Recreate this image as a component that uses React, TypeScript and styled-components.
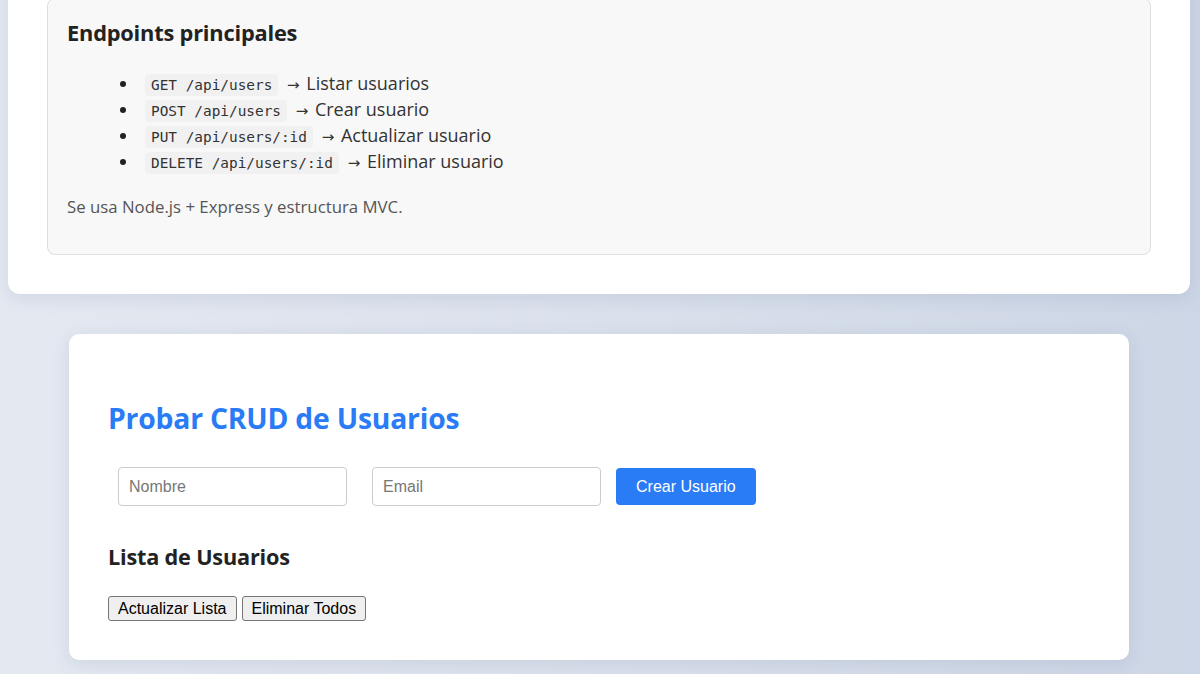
import React from "react";
import styled, { createGlobalStyle } from "styled-components";

const Global = createGlobalStyle`
  html, body { margin: 0; padding: 0; }
  body {
    background: linear-gradient(90deg, #e4e9f1 0%, #dbe1ec 50%, #cdd6e6 100%);
    min-height: 674px;
    font-family: "Open Sans", "Noto Sans", sans-serif;
    color: #222;
    overflow: hidden;
  }
`;

const Page = styled.div`
  padding: 0 10px 40px 8px;
  margin-top: -42px;
  display: flex;
  flex-direction: column;
  align-items: center;
  gap: 40px;
`;

const DocCard = styled.section`
  align-self: stretch;
  background: #fff;
  border-radius: 12px;
  box-shadow: 0 4px 18px rgba(60, 80, 120, 0.12);
  padding: 40px 39px 39px;
`;

const DocBox = styled.div`
  background: #f8f8f8;
  border: 1px solid #dedede;
  border-radius: 8px;
  padding: 19px 19px 36px;
`;

const DocTitle = styled.h3`
  margin: 0 0 23px;
  font-size: 21.8px;
  font-weight: 700;
  line-height: 29px;
  color: #222;
  letter-spacing: -0.2px;
`;

const EndpointList = styled.ul`
  margin: 0;
  padding-left: 72px;
  list-style: disc;
`;

const EndpointItem = styled.li`
  font-size: 18px;
  line-height: 26px;
  height: 26px;
  padding-left: 6px;
  color: #333;
  &::marker { color: #222; }
`;

const Code = styled.code`
  font-family: "DejaVu Sans Mono", "Liberation Mono", monospace;
  font-size: 14.4px;
  line-height: 1;
  background: #f1f1f1;
  color: #333;
  padding: 3px 6px;
  border-radius: 4px;
  margin-right: 4px;
`;

const Arrow = styled.span`
  font-family: "DejaVu Sans", sans-serif;
  font-size: 15px;
  line-height: 1;
  margin-right: 2px;
`;

const Note = styled.p`
  margin: 22px 0 0;
  font-size: 16.8px;
  line-height: 22px;
  color: #555;
`;

const CrudCard = styled.section`
  width: 1060px;
  box-sizing: border-box;
  background: #fff;
  border-radius: 10px;
  box-shadow: 0 4px 18px rgba(60, 80, 120, 0.12);
  padding: 66px 39px 39px;
`;

const CrudTitle = styled.h2`
  margin: 0 0 30px;
  font-size: 28.3px;
  line-height: 37px;
  font-weight: 700;
  color: #2a7bf6;
  letter-spacing: -0.2px;
`;

const FormRow = styled.div`
  display: flex;
  align-items: center;
  gap: 15px;
  padding-left: 10px;
`;

const TextInput = styled.input`
  width: 229px;
  height: 39px;
  box-sizing: border-box;
  border: 1px solid #ccc;
  border-radius: 4px;
  padding: 0 10px;
  font-family: "Liberation Sans", Arial, sans-serif;
  font-size: 16px;
  color: #222;
  background: #fff;
  & + & { margin-left: 10px; }
  &::placeholder { color: #777; }
`;

const PrimaryButton = styled.button`
  height: 37px;
  padding: 0 20px;
  border: none;
  border-radius: 4px;
  background: #2a7bf6;
  color: #fff;
  font-family: "Liberation Sans", Arial, sans-serif;
  font-size: 16px;
  cursor: pointer;
`;

const ListTitle = styled.h3`
  margin: 36px 0 0;
  font-size: 21.7px;
  line-height: 29px;
  font-weight: 700;
  color: #222;
  letter-spacing: -0.2px;
`;

const ButtonRow = styled.div`
  display: flex;
  gap: 5px;
  margin-top: 25px;
`;

const PlainButton = styled.button`
  font-family: "Liberation Sans", Arial, sans-serif;
  font-size: 16px;
  line-height: 19px;
  padding: 2px 9px;
  color: #000;
  background: #efefef;
  border: 1px solid #767676;
  border-radius: 3px;
  cursor: pointer;
`;

const endpoints = [
  { code: "GET /api/users", text: "Listar usuarios" },
  { code: "POST /api/users", text: "Crear usuario" },
  { code: "PUT /api/users/:id", text: "Actualizar usuario" },
  { code: "DELETE /api/users/:id", text: "Eliminar usuario" },
];

export default function App() {
  return (
    <>
      <Global />
      <Page>
        <DocCard>
          <DocBox>
            <DocTitle>Endpoints principales</DocTitle>
            <EndpointList>
              {endpoints.map((e) => (
                <EndpointItem key={e.code}>
                  <Code>{e.code}</Code> <Arrow>→</Arrow> {e.text}
                </EndpointItem>
              ))}
            </EndpointList>
            <Note>Se usa Node.js + Express y estructura MVC.</Note>
          </DocBox>
        </DocCard>
        <CrudCard>
          <CrudTitle>Probar CRUD de Usuarios</CrudTitle>
          <FormRow>
            <TextInput placeholder="Nombre" />
            <TextInput placeholder="Email" />
            <PrimaryButton>Crear Usuario</PrimaryButton>
          </FormRow>
          <ListTitle>Lista de Usuarios</ListTitle>
          <ButtonRow>
            <PlainButton>Actualizar Lista</PlainButton>
            <PlainButton>Eliminar Todos</PlainButton>
          </ButtonRow>
        </CrudCard>
      </Page>
    </>
  );
}
